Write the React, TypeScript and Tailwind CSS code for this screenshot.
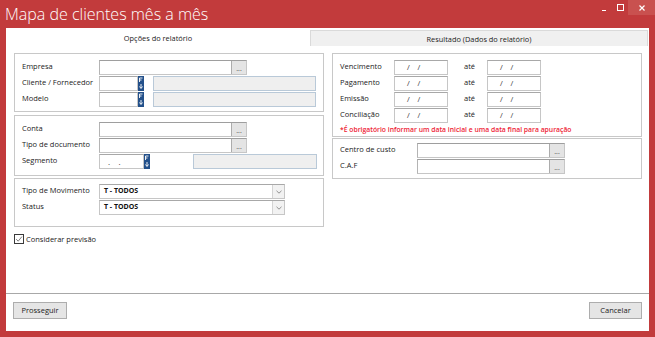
import React from "react";

const FKey = () => (
  <svg width="6" height="15" viewBox="0 0 6 15" className="block">
    <rect x="0" y="0" width="6" height="15" fill="#23508a" />
    <path d="M1.5 2 H4.5 M1.5 2 V6 M1.5 4 H3.5" stroke="#fff" strokeWidth="0.9" fill="none" />
    <path d="M3 8 V12 M1.5 10.5 L3 12.5 L4.5 10.5" stroke="#fff" strokeWidth="0.9" fill="none" />
  </svg>
);

const Dots = () => (
  <div className="w-[15px] h-full bg-[#e4e4e4] border-l border-[#acacac] flex items-end justify-center pb-[2px]">
    <span className="text-[7px] leading-[7px] text-[#444]">...</span>
  </div>
);

const Lookup = ({ w }: { w: string }) => (
  <div className={`${w} h-[15px] flex border border-[#c6c6c6] border-t-[#9e9e9e] border-l-[#b4b4b4] bg-white`}>
    <div className="flex-1" />
    <Dots />
  </div>
);

const Disabled = ({ w }: { w: string }) => (
  <div className={`${w} h-[15px] bg-[#efefef] border border-[#b9c9d8]`} />
);

const Plain = ({ w, children }: { w: string; children?: React.ReactNode }) => (
  <div className={`${w} h-[15px] bg-white border border-[#c6c6c6] border-t-[#a8a8a8] flex items-center`}>
    {children}
  </div>
);

const Label = ({ w, children }: { w: string; children: React.ReactNode }) => (
  <div className={`${w} shrink-0 text-[7.5px] leading-[12px] text-[#1b1b1b] self-start whitespace-nowrap`}>{children}</div>
);

const Select = () => (
  <div className="w-[186px] h-[15px] flex border border-[#c6c6c6] border-t-[#a8a8a8] bg-white">
    <div className="flex-1 pl-[4px] flex items-center text-[7px] font-bold text-[#111]">T - TODOS</div>
    <div className="w-[12px] bg-[#f2f2f2] border-l border-[#d4d4d4] flex items-center justify-center">
      <svg width="6" height="4" viewBox="0 0 6 4">
        <path d="M0.5 0.8 L3 3.2 L5.5 0.8" stroke="#777" strokeWidth="0.8" fill="none" />
      </svg>
    </div>
  </div>
);

const DateBox = () => (
  <Plain w="w-[54px]">
    <span className="pl-[12px] text-[7.5px] text-[#333] whitespace-pre">/    /</span>
  </Plain>
);

const DateRow = ({ label }: { label: string }) => (
  <div className="h-[15px] flex">
    <Label w="w-[54px]">{label}</Label>
    <DateBox />
    <div className="w-[16px]" />
    <Label w="w-[23px]">até</Label>
    <DateBox />
  </div>
);

export default function App() {
  return (
    <div className="w-[655px] h-[337px] bg-[#c23b3c] flex flex-col overflow-hidden font-['Open_Sans',sans-serif] text-[#1b1b1b]">
      {/* Title bar */}
      <div className="h-[28px] flex items-start">
        <div className="pl-[5px] pt-[2px] text-[16px] leading-[24px] font-light text-white whitespace-nowrap">
          Mapa de clientes mês a mês
        </div>
        <div className="ml-auto flex h-[15px]">
          <div className="w-[16px] flex items-end justify-start pb-[4px] pl-[5px]">
            <div className="w-[4px] h-[1px] bg-white" />
          </div>
          <div className="w-[15px] flex items-center justify-center">
            <div className="w-[7px] h-[7px] border border-white" />
          </div>
          <div className="w-[27px] bg-[#c9514f] flex items-center justify-center">
            <svg width="6" height="6" viewBox="0 0 6 6">
              <path d="M0.5 0.5 L5.5 5.5 M5.5 0.5 L0.5 5.5" stroke="#fff" strokeWidth="1.2" />
            </svg>
          </div>
        </div>
      </div>

      {/* Body */}
      <div className="flex-1 mx-[6px] mb-[6px] bg-white flex flex-col">
        {/* Tabs */}
        <div className="h-[18px] flex">
          <div className="w-[304px] flex items-center justify-center text-[7.4px] leading-[10px] pt-[1px]">
            Opções do relatório
          </div>
          <div className="flex-1 mt-[2px] mr-[1px] bg-[#f0f0f0] border border-b-0 border-[#dadada] flex items-center justify-center text-[7.4px] leading-[10px]">
            Resultado (Dados do relatório)
          </div>
        </div>

        {/* Tab content */}
        <div className="flex-1 flex gap-[8px] pl-[8px] pt-[7px]">
          {/* Left column */}
          <div className="w-[310px] flex flex-col">
            <div className="h-[59px] border border-[#c8c8c8] pl-[7px] pt-[6px] flex flex-col gap-[1px]">
              <div className="h-[15px] flex">
                <Label w="w-[77px]">Empresa</Label>
                <Lookup w="w-[148px]" />
              </div>
              <div className="h-[15px] flex">
                <Label w="w-[77px]">Cliente / Fornecedor</Label>
                <Plain w="w-[39px]" />
                <FKey />
                <div className="w-[9px]" />
                <Disabled w="w-[163px]" />
              </div>
              <div className="h-[15px] flex">
                <Label w="w-[77px]">Modelo</Label>
                <Plain w="w-[39px]" />
                <FKey />
                <div className="w-[9px]" />
                <Disabled w="w-[163px]" />
              </div>
            </div>

            <div className="mt-[3px] h-[61px] border border-[#c8c8c8] pl-[7px] pt-[6px] flex flex-col gap-[1px]">
              <div className="h-[15px] flex">
                <Label w="w-[77px]">Conta</Label>
                <Lookup w="w-[148px]" />
              </div>
              <div className="h-[15px] flex">
                <Label w="w-[77px]">Tipo de documento</Label>
                <Lookup w="w-[148px]" />
              </div>
              <div className="h-[15px] flex">
                <Label w="w-[77px]">Segmento</Label>
                <Plain w="w-[45px]">
                  <span className="pl-[8px] text-[8px] text-[#333] whitespace-pre">.    .</span>
                </Plain>
                <FKey />
                <div className="w-[43px]" />
                <Disabled w="w-[124px]" />
              </div>
            </div>

            <div className="mt-[2px] h-[49px] border border-[#c8c8c8] pl-[7px] pt-[5px] flex flex-col gap-[1px]">
              <div className="h-[15px] flex">
                <Label w="w-[77px]">Tipo de Movimento</Label>
                <Select />
              </div>
              <div className="h-[15px] flex">
                <Label w="w-[77px]">Status</Label>
                <Select />
              </div>
            </div>

            <div className="mt-[6px] flex items-center gap-[2px]">
              <div className="w-[10px] h-[10px] border border-[#3a3a3a] bg-white flex items-center justify-center">
                <svg width="8" height="8" viewBox="0 0 8 8">
                  <path d="M1.2 4.2 L3.2 6.2 L6.9 1.6" stroke="#444" strokeWidth="0.7" fill="none" />
                </svg>
              </div>
              <span className="text-[7.5px] leading-[12px]">Considerar previsão</span>
            </div>
          </div>

          {/* Right column */}
          <div className="w-[310px] flex flex-col">
            <div className="h-[84px] border border-[#c8c8c8] pl-[7px] pt-[6px] flex flex-col gap-[1px]">
              <DateRow label="Vencimento" />
              <DateRow label="Pagamento" />
              <DateRow label="Emissão" />
              <DateRow label="Conciliação" />
              <div className="text-[6.8px] leading-[12px] font-semibold text-[#ee1c35] whitespace-nowrap">
                *É obrigatório informar um data inicial e uma data final para apuração
              </div>
            </div>
            <div className="mt-[1px] h-[41px] border border-[#c8c8c8] pl-[7px] pt-[4px] flex flex-col gap-[1px]">
              <div className="h-[15px] flex">
                <Label w="w-[77px]">Centro de custo</Label>
                <Lookup w="w-[148px]" />
              </div>
              <div className="h-[15px] flex">
                <Label w="w-[77px]">C.A.F</Label>
                <Lookup w="w-[148px]" />
              </div>
            </div>
          </div>
        </div>

        {/* Footer */}
        <div className="h-[38px] border-t border-[#a8a8a8] flex justify-between items-start pt-[8px] px-[7px]">
          <div className="w-[54px] h-[17px] bg-[#e5e5e5] border border-[#adadad] flex items-center justify-center text-[7.5px]">
            Prosseguir
          </div>
          <div className="w-[53px] h-[17px] bg-[#e5e5e5] border border-[#adadad] flex items-center justify-center text-[7.5px]">
            Cancelar
          </div>
        </div>
      </div>
    </div>
  );
}
